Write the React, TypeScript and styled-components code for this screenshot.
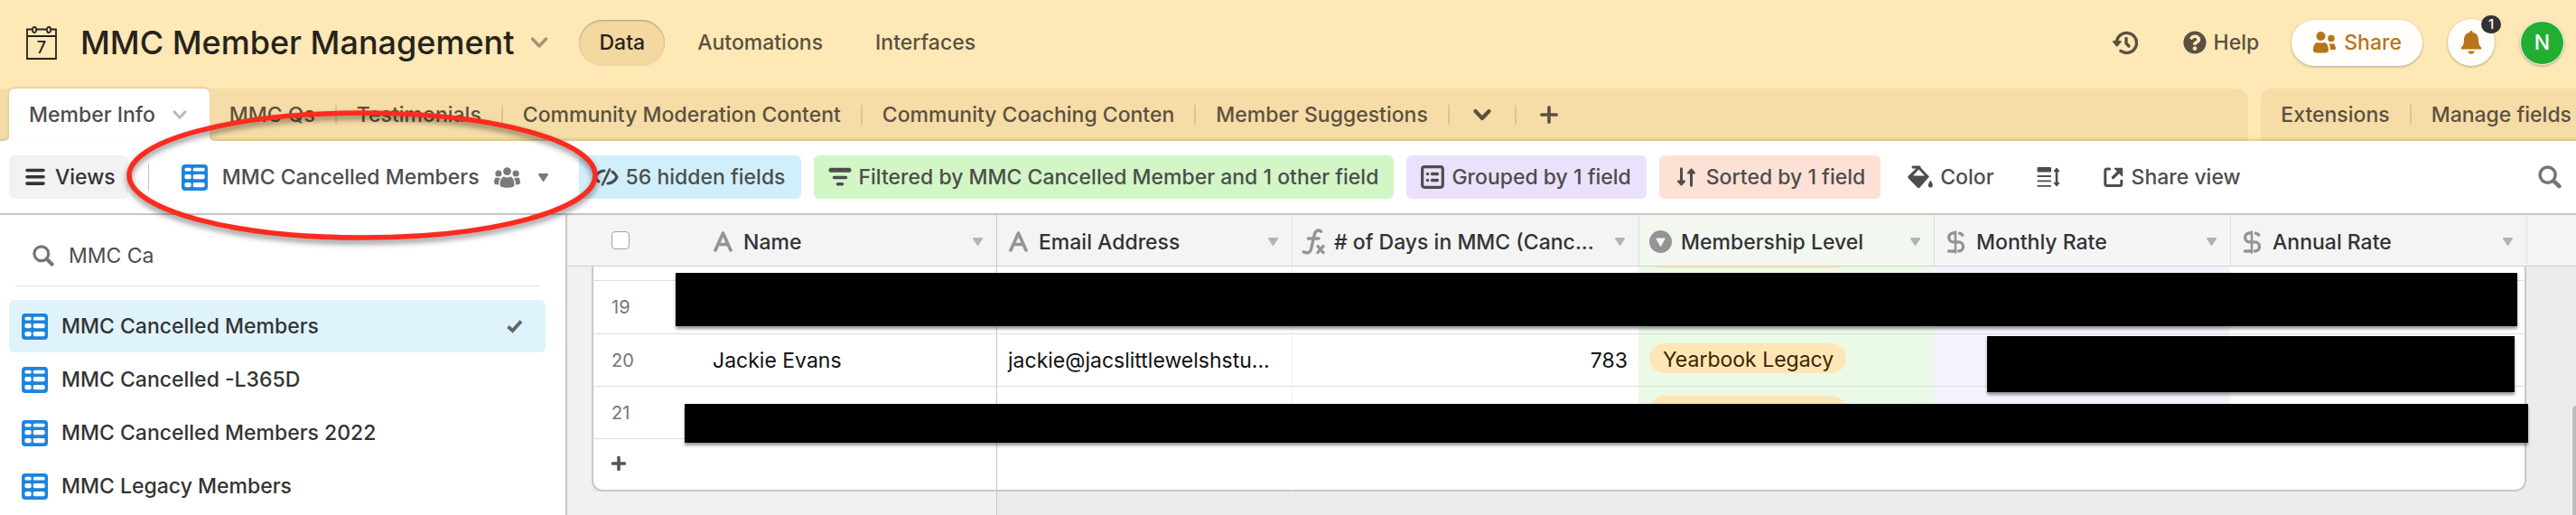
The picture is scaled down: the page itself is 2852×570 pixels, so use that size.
import React from "react";
import styled, { createGlobalStyle, css } from "styled-components";
import { FaQuestionCircle } from "react-icons/fa";

const GlobalStyle = createGlobalStyle`
  * { box-sizing: border-box; }
  body {
    margin: 0;
    background: #fff;
    color: #333;
    font-family: Inter, "Liberation Sans", sans-serif;
    font-size: 23px;
    line-height: 30px;
  }
  button, input { font: inherit; color: inherit; }
  button { border: 0; background: none; padding: 0; white-space: nowrap; cursor: pointer; }
  svg { display: block; flex: none; }
`;

const Page = styled.div`
  position: relative;
  display: flex;
  flex-direction: column;
  min-height: 100vh;
  overflow: hidden;
`;

/* ---------- header ---------- */

const Header = styled.header`
  display: flex;
  align-items: center;
  height: 98px;
  padding: 0 13px 4px 29px;
  background: #fee8b6;
  color: #595140;
  font-weight: 500;
`;

const BaseTitle = styled.h1`
  margin: 0 18px 0 26px;
  font-size: 36px;
  line-height: 44px;
  font-weight: 500;
  color: #26231b;
  white-space: nowrap;
`;

const HeaderNav = styled.nav`
  display: flex;
  gap: 14px;
  margin-left: 34px;
`;

const NavButton = styled.button<{ $active?: boolean }>`
  height: 51px;
  padding: 0 22px;
  border-radius: 26px;
  ${(p) =>
    p.$active &&
    css`
      background: #f3d8a0;
      color: #26231b;
      box-shadow: inset 0 1px 2px rgba(0, 0, 0, 0.3);
    `}
`;

const HeaderActions = styled.div`
  display: flex;
  align-items: center;
  gap: 28px;
  margin-left: auto;
`;

const PlainAction = styled.button`
  display: flex;
  align-items: center;
  gap: 8px;
  margin-right: 8px;
`;

const HistoryAction = styled(PlainAction)`
  margin-right: 22px;
`;

const ShareButton = styled.button`
  display: flex;
  align-items: center;
  gap: 9px;
  height: 51px;
  padding: 0 23px 0 24px;
  border-radius: 26px;
  background: #fffefb;
  color: #b87419;
  box-shadow: 0 1px 3px rgba(0, 0, 0, 0.3);
`;

const BellButton = styled.button`
  position: relative;
  display: flex;
  align-items: center;
  justify-content: center;
  width: 52px;
  height: 52px;
  border-radius: 50%;
  background: #fffefb;
  color: #b87419;
  box-shadow: 0 1px 3px rgba(0, 0, 0, 0.3);
`;

const Badge = styled.span`
  position: absolute;
  top: -4px;
  right: -7px;
  width: 22px;
  height: 20px;
  border-radius: 10px;
  background: #333;
  color: #fff;
  font-size: 15px;
  line-height: 20px;
`;

const Avatar = styled.button`
  width: 49px;
  height: 49px;
  border-radius: 50%;
  border: 1px solid #fff;
  background: #22ae30;
  color: #fff;
  box-shadow: 0 1px 3px rgba(0, 0, 0, 0.3);
`;

/* ---------- table tabs ---------- */

const TabBar = styled.nav`
  display: flex;
  height: 58px;
  background: linear-gradient(#fee8b6 50%, #fff 50%);
  color: #5c5140;
  font-weight: 500;
`;

const stripShadow = css`
  box-shadow: inset 0 -4px 3px -2px rgba(120, 80, 0, 0.2);
`;

const StripStart = styled.div`
  width: 10px;
  border-bottom-right-radius: 6px;
  background: #f6dca6;
  ${stripShadow}
`;

const ActiveTab = styled.button`
  display: flex;
  align-items: center;
  gap: 19px;
  padding: 0 25px 0 22px;
  border-radius: 6px 6px 0 0;
  background: #fff;
  color: #4d4d4d;
  box-shadow: 0 -1px 3px rgba(120, 80, 0, 0.25);
`;

const TabStrip = styled.div`
  display: flex;
  flex: 1;
  align-items: center;
  border-radius: 0 12px 0 6px;
  background: #f6dca6;
  ${stripShadow}
`;

const StripGap = styled.div`
  width: 14px;
  background: #fee8b6;
  ${stripShadow}
`;

const SideStrip = styled.div`
  display: flex;
  align-items: center;
  border-radius: 12px 0 0 0;
  padding-right: 5px;
  background: #f6dca6;
  ${stripShadow}
`;

const Tab = styled.button<{ $last?: boolean }>`
  display: flex;
  align-items: center;
  padding: 0 ${(p) => (p.$last ? 0 : 22)}px 0 22px;
`;

const IconTab = styled(Tab)`
  padding: 0 26px;
`;

const TabDivider = styled.span`
  width: 2px;
  height: 22px;
  background: #dfc48f;
`;

/* ---------- view toolbar ---------- */

const Toolbar = styled.div`
  display: flex;
  align-items: center;
  height: 82px;
  padding: 0 16px 0 10px;
  border-bottom: 2px solid #c6c6c6;
  color: #4d4d4d;
  font-weight: 500;
`;

const ViewsButton = styled.button`
  display: flex;
  align-items: center;
  gap: 11px;
  height: 48px;
  padding: 0 14px 0 18px;
  border-radius: 6px;
  background: #f2f2f2;
  color: #333;
`;

const ToolbarDivider = styled.span`
  width: 1px;
  height: 30px;
  margin: 0 36px 0 22px;
  background: #c4c4c4;
`;

const ViewSwitch = styled.button`
  display: flex;
  align-items: center;
  gap: 16px;
`;

const ViewAudience = styled.span`
  display: flex;
  align-items: center;
  gap: 20px;
  color: #7a7a7a;
`;

const ToolGroup = styled.div`
  display: flex;
  gap: 14px;
  margin-left: 34px;
`;

const ToolButton = styled.button<{ $tint?: string }>`
  display: flex;
  align-items: center;
  gap: 8px;
  height: 48px;
  padding: 0 17px 0 16px;
  border-radius: 6px;
  background: ${(p) => p.$tint ?? "transparent"};
`;

const SearchButton = styled.button`
  margin-left: auto;
  color: #757575;
`;

/* ---------- body ---------- */

const Body = styled.div`
  display: flex;
  flex: 1;
`;

const Sidebar = styled.aside`
  flex: none;
  width: 628px;
  padding: 0 22px 0 10px;
  border-right: 2px solid #c8c8c8;
`;

const SearchField = styled.label`
  display: flex;
  align-items: center;
  gap: 16px;
  height: 79px;
  margin: 0 7px 15px;
  padding: 12px 19px 0;
  border-bottom: 1px solid #e0e0e0;
  color: #757575;
`;

const SearchInput = styled.input`
  flex: 1;
  height: 40px;
  padding: 0;
  border: 0;
  outline: 0;
  background: none;
  color: #4d4d4d;
`;

const ViewList = styled.ul`
  display: flex;
  flex-direction: column;
  gap: 1px;
  margin: 0;
  padding: 0;
  list-style: none;
`;

const ViewItem = styled.button<{ $selected?: boolean }>`
  display: flex;
  align-items: center;
  gap: 15px;
  width: 100%;
  height: 58px;
  padding: 0 25px 0 14px;
  border-radius: 6px;
  font-weight: 500;
  background: ${(p) => (p.$selected ? "#dff3fd" : "transparent")};
`;

const SelectedMark = styled.span`
  margin-left: auto;
  color: #666;
`;

const GridPane = styled.main`
  position: relative;
  display: flex;
  flex: 1;
  flex-direction: column;
  min-width: 0;
  background: #ececec;
`;

const Grid = styled.table`
  width: 100%;
  table-layout: fixed;
  border-collapse: separate;
  border-spacing: 0;
  white-space: nowrap;
`;

const Col = styled.col<{ $w?: number }>`
  width: ${(p) => (p.$w ? p.$w + "px" : "auto")};
`;

const HeadCell = styled.th<{ $tint?: string; $line?: string }>`
  height: 57px;
  padding: 3px 0 0;
  border-bottom: 1px solid #cfcfcf;
  border-left: ${(p) => (p.$line ? `1px solid ${p.$line}` : "0")};
  background: ${(p) => p.$tint ?? "#f4f4f4"};
  font-weight: 500;
  text-align: left;
`;

const HeadContent = styled.div`
  display: flex;
  align-items: center;
  padding: 0 15px 0 8px;
`;

const FieldIcon = styled.span`
  display: flex;
  justify-content: center;
  width: 30px;
  margin-right: 8px;
  color: #949494;
`;

const Caret = styled.span`
  margin-left: auto;
  color: #b3b3b3;
`;

const SelectAll = styled.input`
  display: block;
  appearance: none;
  width: 20px;
  height: 20px;
  margin: 0 0 4px 22px;
  border: 1px solid #9aa3ad;
  border-radius: 4px;
  background: #fff;
`;

const tints: Record<string, string> = { level: "#eafae7", monthly: "#f5f2fe" };

const Cell = styled.td<{ $kind?: string; $plain?: boolean }>`
  padding: 0 12px;
  border-bottom: 1px solid #dcdee0;
  background: ${(p) => (!p.$plain && p.$kind && tints[p.$kind]) || "#fff"};
  font-weight: 400;
  color: #111;
  overflow: hidden;
  text-align: ${(p) => (p.$kind === "days" ? "right" : "left")};
  ${(p) =>
    p.$kind === "email" &&
    css`
      border-left: 1px solid #c8c8c8;
    `}
  ${(p) =>
    p.$kind === "days" &&
    css`
      border-left: 1px solid ${p.$plain ? "#fff" : "#efefef"};
    `}
  ${(p) =>
    p.$kind === "level" &&
    css`
      vertical-align: top;
    `}
  ${(p) =>
    p.$kind === "annual" &&
    css`
      border-right: 2px solid #c8c8c8;
    `}
`;

const NumberCell = styled(Cell)`
  padding: 0 0 0 20px;
  border-left: 2px solid #c8c8c8;
  color: #757575;
  font-size: 20px;
`;

const Gutter = styled.td<{ $tone: string }>`
  padding: 0;
  background: ${(p) => p.$tone};
`;

const Row = styled.tr<{ $h: number }>`
  height: ${(p) => p.$h}px;
`;

const AddRow = styled(Row)`
  td:not(:first-child):not(:last-child) {
    border-bottom: 2px solid #c8c8c8;
  }
  td:nth-child(2) {
    border-bottom-left-radius: 12px;
    color: #555;
  }
  td:nth-last-child(2) {
    border-bottom-right-radius: 12px;
  }
`;

const Pill = styled.span`
  display: block;
  width: max-content;
  min-width: 218px;
  height: 33px;
  margin-top: 10px;
  padding: 3px 14px 0 15px;
  border-radius: 17px;
  background: #ffe6b6;
  color: #3b2501;
`;

const PillEdge = styled.span`
  display: block;
  width: 202px;
  height: 2px;
  margin-left: 8px;
  border-radius: 0 0 6px 6px;
  background: #ffe6b6;
`;

const BelowGrid = styled.div`
  display: flex;
  flex: 1;
`;

const BelowFrozen = styled.div`
  width: 476px;
  border-right: 1px solid #c8c8c8;
  background: #f1f1f1;
`;

const Redaction = styled.div<{ $x: number; $y: number; $w: number; $h: number }>`
  position: absolute;
  left: ${(p) => p.$x}px;
  top: ${(p) => p.$y}px;
  width: ${(p) => p.$w}px;
  height: ${(p) => p.$h}px;
  background: #000;
  box-shadow: 0 3px 3px rgba(0, 0, 0, 0.4);
`;

const ScrollThumb = styled.div`
  position: absolute;
  top: 210px;
  right: 0;
  bottom: 0;
  width: 5px;
  border: 1px solid #fafafa;
  border-width: 1px 0 0 1px;
  border-radius: 8px 0 0 0;
  background: #bcbcbc;
`;

const Circled = styled.svg`
  position: absolute;
  left: 131px;
  top: 112px;
  filter: drop-shadow(0 4px 3px rgba(0, 0, 0, 0.45));
  pointer-events: none;
`;

/* ---------- icons ---------- */

const CalendarIcon = () => (
  <svg width="34" height="37" viewBox="0 0 34 37" fill="none" stroke="#26231b" strokeWidth="1.8">
    <path d="M6 3.5H1V36h32V3.500H28M12 3.500h10M1 11h32" />
    <rect x="7" y="1" width="4" height="6" rx="2" />
    <rect x="23" y="1" width="4" height="6" rx="2" />
    <text x="17" y="30" textAnchor="middle" fontSize="18" fontWeight="500" fill="#26231b" stroke="none">7</text>
  </svg>
);

const Chevron = ({ w, color, weight = 3.5 }: { w: number; color: string; weight?: number }) => (
  <svg width={w} height={w} viewBox="0 0 20 20" fill="none" stroke={color} strokeWidth={weight} strokeLinecap="round" strokeLinejoin="round">
    <path d="M2.500 6l7.500 8 7.500-8" />
  </svg>
);

const Triangle = () => (
  <svg width="11" height="9" viewBox="0 0 11 9" fill="currentColor">
    <path d="M1 0h9a1 1 0 0 1 .8 1.500l-4.500 7a1 1 0 0 1-1.600 0l-4.500-7A1 1 0 0 1 1 0z" />
  </svg>
);

const HistoryIcon = () => (
  <svg width="28" height="27" viewBox="0 0 28 27" fill="none" stroke="currentColor" strokeWidth="3.4" strokeLinecap="round" strokeLinejoin="round">
    <path d="M4.500 12.500a11 11 0 1 1 4.500 9.800" />
    <path d="M1 12l3.700 4.500 4-4.500z" fill="currentColor" strokeWidth="2" />
    <path d="M15 8.500v5.500l3 3" strokeWidth="3.400" />
  </svg>
);

const SharePeopleIcon = () => (
  <svg width="25" height="24" viewBox="0 0 25 24" fill="currentColor">
    <circle cx="8.500" cy="5" r="5" />
    <path d="M0 20c0-4.500 2.500-8 5-8 1.500.8 5.500.8 7 0 2.500 0 5 3.500 5 8 0 2.500-1.500 3.500-4 3.500H4C1.500 23.500 0 22.500 0 20z" />
    <circle cx="20" cy="7.500" r="3.800" />
    <path d="M17.500 13c1.500.8 3.500.8 5 0 1.500 1 2.500 3.500 2.500 5.500 0 1-.8 1.500-2 1.500h-4c0-2-.5-4.500-1.500-7z" />
  </svg>
);

const BellIcon = () => (
  <svg width="24" height="27" viewBox="0 0 24 27" fill="currentColor">
    <path d="M12 0c1 0 1.500.7 1.500 1.700 4 .8 6.500 4 6.500 8.300 0 4.500 1 6.500 3 8.500.8.900.3 2-.8 2H1.800c-1.100 0-1.600-1.100-.8-2 2-2 3-4 3-8.500 0-4.300 2.500-7.500 6.500-8.300C10.500.7 11 0 12 0z" />
    <path d="M8.200 22.500h7.600c-.5 2-2 3.300-3.800 3.300s-3.300-1.300-3.800-3.300z" />
  </svg>
);

const PlusIcon = ({ size, weight }: { size: number; weight: number }) => (
  <svg width={size} height={size} viewBox="0 0 20 20" fill="none" stroke="currentColor" strokeWidth={weight} strokeLinecap="round">
    <path d="M10 1.800v16.400M1.800 10h16.400" />
  </svg>
);

const MenuIcon = () => (
  <svg width="22" height="20" viewBox="0 0 22 20" stroke="currentColor" strokeWidth="3.600" strokeLinecap="round">
    <path d="M2 2.500h18M2 9.800h18M2 17.100h18" />
  </svg>
);

const GridViewIcon = () => (
  <svg width="29" height="29" viewBox="0 0 29 29">
    <rect width="29" height="29" rx="4" fill="#1d84dd" />
    <g fill="#fff">
      <rect x="3.500" y="3.700" width="7.200" height="3.800" rx="1.500" />
      <rect x="12.700" y="3.700" width="13" height="3.800" rx="1.500" />
      <rect x="3.500" y="11" width="7.200" height="5.200" rx="1.800" />
      <rect x="12.700" y="11" width="13" height="5.200" rx="1.800" />
      <rect x="3.500" y="20" width="7.200" height="5.200" rx="1.800" />
      <rect x="12.700" y="20" width="13" height="5.200" rx="1.800" />
    </g>
  </svg>
);

const PeopleIcon = () => (
  <svg width="29" height="23" viewBox="0 0 29 23" fill="currentColor">
    <circle cx="14.500" cy="4.600" r="4.400" />
    <circle cx="4.900" cy="7" r="3.600" />
    <circle cx="24.100" cy="7" r="3.600" />
    <path d="M6.500 19.500c0-5 2-8.500 4.500-9 2 1.200 5 1.200 7 0 2.500.5 4.500 4 4.500 9 0 2-2.500 3.300-8 3.300s-8-1.300-8-3.300z" />
    <path d="M5 19.500c-3.500 0-5-.8-5-2.500 0-3 .9-5 2.300-5.800 1.500.9 3.500.9 5 .2C5.800 13.500 5 16.200 5 19.500zM24 19.500c3.500 0 5-.8 5-2.500 0-3-.9-5-2.300-5.800-1.500.9-3.500.9-5 .2 1.500 2.100 2.300 4.800 2.300 8.100z" />
  </svg>
);

const HiddenIcon = () => (
  <svg width="28" height="20" viewBox="0 0 28 20" fill="none" stroke="currentColor" strokeWidth="3.200" strokeLinecap="round" strokeLinejoin="round">
    <path d="M12 3C7.500 3.200 4 5.800 2 10c.9 1.900 2.200 3.600 3.900 4.900" />
    <path d="M21 4.200c2.200 1.300 3.900 3.300 5 5.800-2 4.200-5.500 6.600-10 7" />
    <path d="M18 1.500l-8 17" strokeWidth="2.600" />
  </svg>
);

const FilterIcon = () => (
  <svg width="26" height="22" viewBox="0 0 26 22" stroke="currentColor" strokeLinecap="round">
    <path d="M3 3.200h20" strokeWidth="5" />
    <path d="M6.500 11.500h13M10.500 18.800h5" strokeWidth="3.600" />
  </svg>
);

const GroupIcon = () => (
  <svg width="26" height="26" viewBox="0 0 26 26" fill="none" stroke="currentColor">
    <rect x="1.700" y="1.700" width="22.600" height="22.600" rx="2.500" strokeWidth="3.200" />
    <path d="M7.500 9.500h.1M7.500 16.500h.1M12.500 9.500h6M12.500 16.500h6" strokeWidth="3.400" strokeLinecap="round" />
  </svg>
);

const SortIcon = () => (
  <svg width="28" height="22" viewBox="-3 0 28 22" fill="none" stroke="currentColor" strokeWidth="3" strokeLinecap="round" strokeLinejoin="round">
    <path d="M5.500 1.700v15M16.500 20.300v-15" />
    <path d="M2 15.500h7l-3.500 4zM13 6.500h7l-3.500-4z" fill="currentColor" strokeWidth="2" />
  </svg>
);

const BucketIcon = () => (
  <svg width="28" height="26" viewBox="0 0 28 26" fill="currentColor">
    <path d="M1 11.500L12.500 0.500 24 12.500 13.500 24.500a2 2 0 0 1-2.800 0L0.800 14.300a2 2 0 0 1 .2-2.800zM6 11.500h13L12.300 4.500z" fillRule="evenodd" />
    <path d="M6 2h7" stroke="currentColor" strokeWidth="3" strokeLinecap="round" />
    <path d="M25.300 16.500c1.500 2.400 2.500 4 2.500 5.500a2.500 2.500 0 0 1-5 0c0-1.500 1-3.100 2.500-5.500z" />
  </svg>
);

const RowHeightIcon = () => (
  <svg width="26" height="22" viewBox="0 0 26 22" fill="none" stroke="currentColor" strokeLinecap="round" strokeLinejoin="round">
    <rect x="0.500" y="0" width="15.500" height="5.500" rx="1" fill="currentColor" stroke="none" />
    <path d="M1.200 10h14M1.200 15.400h14M1.200 20.800h14" strokeWidth="1.800" />
    <path d="M22 3v16" strokeWidth="2.600" />
    <path d="M19.500 4.500L22 1.500l2.500 3zM19.500 17.500l2.500 3 2.500-3z" fill="currentColor" strokeWidth="1.500" />
  </svg>
);

const ShareViewIcon = () => (
  <svg width="24" height="22" viewBox="-1 0 24 22" fill="none" stroke="currentColor" strokeWidth="3" strokeLinecap="round" strokeLinejoin="round">
    <path d="M6.500 2H3.500A2 2 0 0 0 1.800 4v14.500a2 2 0 0 0 2 2h14a2 2 0 0 0 2-2V15" />
    <path d="M10.500 11.500l8-8" strokeWidth="3.400" />
    <path d="M12.500 1.500h8v8z" fill="currentColor" strokeWidth="1.400" />
  </svg>
);

const SearchIcon = ({ size }: { size: number }) => (
  <svg width={size} height={size} viewBox="0 0 24 24" fill="none" stroke="currentColor">
    <circle cx="9.800" cy="9.800" r="7.900" strokeWidth="3.200" />
    <path d="M15.800 15.800l5.800 5.600" strokeWidth="4.200" strokeLinecap="round" />
  </svg>
);

const CheckIcon = () => (
  <svg width="18" height="15" viewBox="0 0 18 15" fill="none" stroke="currentColor" strokeWidth="4">
    <path d="M1.500 7.500l5 4.500L16 1.500" />
  </svg>
);

const TextFieldIcon = () => (
  <svg width="21" height="23" viewBox="0 0 21 23" fill="none" stroke="currentColor" strokeWidth="3.600" strokeLinecap="round" strokeLinejoin="round">
    <path d="M2 21L10.500 2 19 21M5.500 14.500h10" />
  </svg>
);

const FormulaIcon = () => (
  <svg width="27" height="29" viewBox="0 0 27 29" fill="none" stroke="currentColor" strokeLinecap="round">
    <path d="M21.500 3.200c-3.500-2.500-6.300-.5-7.200 3.300L10.800 22c-1 4.500-4.300 6-8.500 3.800M7.500 11h11.500" strokeWidth="3.400" />
    <path d="M18 19.500l6 7M24 19.500l-6 7" strokeWidth="3.400" />
  </svg>
);

const SelectFieldIcon = () => (
  <svg width="25" height="25" viewBox="0 0 25 25">
    <circle cx="12.500" cy="12.500" r="12.500" fill="currentColor" />
    <path d="M7.800 9h9.400L12.500 17.500z" fill="#f2f7f0" stroke="#f2f7f0" strokeLinejoin="round" />
  </svg>
);

const CurrencyIcon = () => (
  <svg width="20" height="26" viewBox="0 0 20 26" fill="none" stroke="currentColor" strokeWidth="3.400" strokeLinecap="round">
    <path d="M9 3H7a5 5 0 0 0 0 9.900h6.500a5 5 0 0 1 0 10M9 23H2.500M14.500 3.200c1.300.3 2.500 1 3.200 2" />
    <path d="M10 1.500v23" strokeWidth="2.600" />
  </svg>
);

/* ---------- data ---------- */

const tabs = ["MMC Qs", "Testimonials", "Community Moderation Content", "Community Coaching Conten", "Member Suggestions"];
const views = ["MMC Cancelled Members", "MMC Cancelled -L365D", "MMC Cancelled Members 2022", "MMC Legacy Members"];

const fields = [
  { name: "Name", icon: <TextFieldIcon /> },
  { name: "Email Address", icon: <TextFieldIcon />, line: "#c8c8c8" },
  { name: "# of Days in MMC (Canc...", icon: <FormulaIcon />, line: "#dcdfe4" },
  { name: "Membership Level", icon: <SelectFieldIcon />, line: "#dcdfe4", tint: "#f2f7f0" },
  { name: "Monthly Rate", icon: <CurrencyIcon />, line: "#dcdfe4", tint: "#f5f5f8" },
  { name: "Annual Rate", icon: <CurrencyIcon />, line: "#dcdfe4" },
];

const records = [
  { no: "", h: 16, level: <PillEdge /> },
  { no: "19", h: 59 },
  { no: "20", h: 58, name: "Jackie Evans", email: "jackie@jacslittlewelshstu...", days: "783", level: <Pill>Yearbook Legacy</Pill> },
  { no: "21", h: 58, level: <Pill /> },
];

export default function App() {
  return (
    <Page>
      <GlobalStyle />
      <Header>
        <CalendarIcon />
        <BaseTitle>MMC Member Management</BaseTitle>
        <Chevron w={20} color="#a49675" />
        <HeaderNav>
          <NavButton $active>Data</NavButton>
          <NavButton>Automations</NavButton>
          <NavButton>Interfaces</NavButton>
        </HeaderNav>
        <HeaderActions>
          <HistoryAction aria-label="History"><HistoryIcon /></HistoryAction>
          <PlainAction><FaQuestionCircle size={26} />Help</PlainAction>
          <ShareButton><SharePeopleIcon />Share</ShareButton>
          <BellButton aria-label="Notifications"><BellIcon /><Badge>1</Badge></BellButton>
          <Avatar>N</Avatar>
        </HeaderActions>
      </Header>

      <TabBar>
        <StripStart />
        <ActiveTab>Member Info<Chevron w={16} color="#b8b8b8" weight={3.8} /></ActiveTab>
        <TabStrip>
          {tabs.map((t) => (
            <React.Fragment key={t}>
              <Tab>{t}</Tab>
              <TabDivider />
            </React.Fragment>
          ))}
          <IconTab aria-label="More tables"><Chevron w={20} color="currentColor" weight={4.2} /></IconTab>
          <TabDivider />
          <IconTab aria-label="Add table"><PlusIcon size={20} weight={3.6} /></IconTab>
        </TabStrip>
        <StripGap />
        <SideStrip>
          <Tab>Extensions</Tab>
          <TabDivider />
          <Tab $last>Manage fields</Tab>
        </SideStrip>
      </TabBar>

      <Toolbar>
        <ViewsButton><MenuIcon />Views</ViewsButton>
        <ToolbarDivider />
        <ViewSwitch>
          <GridViewIcon />
          MMC Cancelled Members
          <ViewAudience><PeopleIcon /><Triangle /></ViewAudience>
        </ViewSwitch>
        <ToolGroup>
          <ToolButton $tint="#d0effb"><HiddenIcon />56 hidden fields</ToolButton>
          <ToolButton $tint="#d2f6c6"><FilterIcon />Filtered by MMC Cancelled Member and 1 other field</ToolButton>
          <ToolButton $tint="#ece1fc"><GroupIcon />Grouped by 1 field</ToolButton>
          <ToolButton $tint="#fde1d5"><SortIcon />Sorted by 1 field</ToolButton>
          <ToolButton><BucketIcon />Color</ToolButton>
          <ToolButton aria-label="Row height"><RowHeightIcon /></ToolButton>
          <ToolButton><ShareViewIcon />Share view</ToolButton>
        </ToolGroup>
        <SearchButton aria-label="Search"><SearchIcon size={26} /></SearchButton>
      </Toolbar>

      <Body>
        <Sidebar>
          <SearchField>
            <SearchIcon size={24} />
            <SearchInput aria-label="Find a view" defaultValue="MMC Ca" />
          </SearchField>
          <ViewList>
            {views.map((v, i) => (
              <li key={v}>
                <ViewItem $selected={i === 0}>
                  <GridViewIcon />
                  {v}
                  {i === 0 && <SelectedMark><CheckIcon /></SelectedMark>}
                </ViewItem>
              </li>
            ))}
          </ViewList>
        </Sidebar>

        <GridPane>
          <Grid>
            <colgroup>
              {[27, 122, 326, 327, 384, 327, 328, 328].map((w, i) => <Col key={i} $w={w} />)}
              <Col />
            </colgroup>
            <thead>
              <tr>
                <HeadCell />
                <HeadCell><SelectAll type="checkbox" aria-label="Select all records" /></HeadCell>
                {fields.map((f) => (
                  <HeadCell key={f.name} $tint={f.tint} $line={f.line}>
                    <HeadContent>
                      <FieldIcon>{f.icon}</FieldIcon>
                      {f.name}
                      <Caret><Triangle /></Caret>
                    </HeadContent>
                  </HeadCell>
                ))}
                <HeadCell $line="#dcdfe4" />
              </tr>
            </thead>
            <tbody>
              {records.map((r, i) => (
                <Row key={i} $h={r.h}>
                  <Gutter $tone="#f1f1f1" />
                  <NumberCell>{r.no}</NumberCell>
                  <Cell>{r.name}</Cell>
                  <Cell $kind="email">{r.email}</Cell>
                  <Cell $kind="days">{r.days}</Cell>
                  <Cell $kind="level">{r.level}</Cell>
                  <Cell $kind="monthly" />
                  <Cell $kind="annual" />
                  <Gutter $tone="#ececec" />
                </Row>
              ))}
              <AddRow $h={58}>
                <Gutter $tone="#f1f1f1" />
                <NumberCell $plain><button aria-label="Add record"><PlusIcon size={16} weight={4.5} /></button></NumberCell>
                <Cell $plain />
                <Cell $plain $kind="email" />
                <Cell $plain $kind="days" />
                <Cell $plain $kind="level" />
                <Cell $plain $kind="monthly" />
                <Cell $plain $kind="annual" />
                <Gutter $tone="#ececec" />
              </AddRow>
            </tbody>
          </Grid>
          <BelowGrid><BelowFrozen /></BelowGrid>
          <Redaction $x={120} $y={64} $w={2039} $h={59} />
          <Redaction $x={1572} $y={134} $w={584} $h={62} />
          <Redaction $x={130} $y={209} $w={2041} $h={43} />
          <ScrollThumb />
        </GridPane>
      </Body>

      <Circled width="540" height="164" viewBox="0 0 540 164" fill="none" stroke="#fb2b1f" strokeWidth="5.500">
        <ellipse cx="270" cy="82" rx="258" ry="69" />
      </Circled>
    </Page>
  );
}
